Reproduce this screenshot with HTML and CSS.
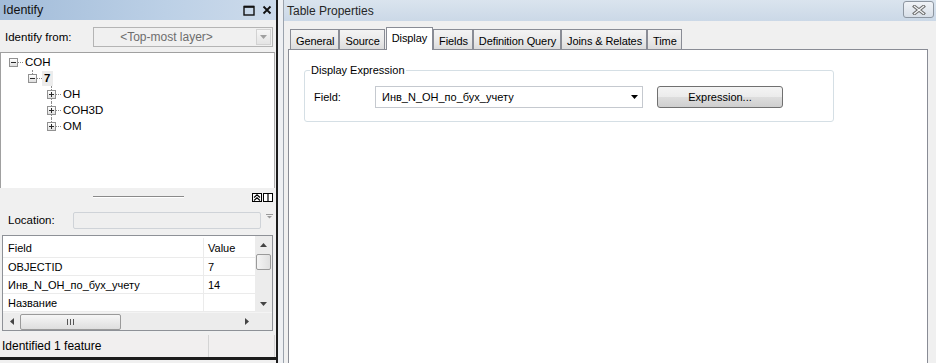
FILE: index.html
```html
<!DOCTYPE html>
<html>
<head>
<meta charset="utf-8">
<link rel="stylesheet" href="styles.css">
</head>
<body>
<div class="app">
  <section class="identify">
    <header class="id-title">
      <span class="id-title-text">Identify</span>
      <span class="win-btns">
        <svg width="12" height="11" viewBox="0 0 12 11"><rect x="1" y="1.5" width="10" height="8.5" fill="none" stroke="#111" stroke-width="1.4"/><line x1="1" y1="1.8" x2="11" y2="1.8" stroke="#111" stroke-width="2"/></svg>
        <svg width="10" height="10" viewBox="0 0 10 10"><path d="M1.5 1.5 L8.5 8.5 M8.5 1.5 L1.5 8.5" stroke="#111" stroke-width="1.8"/></svg>
      </span>
    </header>
    <div class="id-from">
      <span class="id-from-label">Identify from:</span>
      <div class="combo-dis">
        <span class="combo-dis-text">&lt;Top-most layer&gt;</span>
        <span class="combo-dis-btn"><svg width="7" height="4" viewBox="0 0 7 4"><path d="M0 0 H7 L3.5 4 Z" fill="#a0a0a0"/></svg></span>
      </div>
    </div>
    <div class="tree">
      <div class="trow l0"><span class="tbox minus"></span><span class="dots"></span><span class="tlabel">COH</span></div>
      <div class="trow l1 child last"><span class="tbox minus"></span><span class="dots"></span><span class="tlabel sel">7</span></div>
      <div class="trow l2 child"><span class="tbox plus"></span><span class="dots"></span><span class="tlabel">OH</span></div>
      <div class="trow l2 child"><span class="tbox plus"></span><span class="dots"></span><span class="tlabel">COH3D</span></div>
      <div class="trow l2 child last"><span class="tbox plus"></span><span class="dots"></span><span class="tlabel">OM</span></div>
    </div>
    <div class="splitter">
      <span></span>
      <span class="grip"></span>
      <span class="mini-btns">
        <span class="mini"><svg width="8" height="7" viewBox="0 0 8 7"><path d="M1 3.5 L4 0.8 L7 3.5 M1 6.5 L4 3.8 L7 6.5" fill="none" stroke="#000" stroke-width="1.2"/></svg></span>
        <span class="mini"><svg width="8" height="7" viewBox="0 0 8 7"><line x1="4" y1="0" x2="4" y2="7" stroke="#000" stroke-width="1.2"/></svg></span>
      </span>
    </div>
    <div class="loc-row">
      <span class="loc-label">Location:</span>
      <div class="loc-box"></div>
      <span class="loc-drop"><svg width="7" height="5" viewBox="0 0 7 5"><rect x="0" y="0" width="7" height="1" fill="#9a9a9a"/><path d="M1 2 H6 L3.5 4.5 Z" fill="#9a9a9a"/></svg></span>
    </div>
    <div class="grid">
      <div class="grid-body">
        <div class="gtable">
          <div class="grow ghead"><span class="c1">Field</span><span class="c2">Value</span></div>
          <div class="grow"><span class="c1">OBJECTID</span><span class="c2">7</span></div>
          <div class="grow"><span class="c1">Инв_N_OH_по_бух_учету</span><span class="c2">14</span></div>
          <div class="grow"><span class="c1">Название</span><span class="c2"></span></div>
        </div>
        <div class="vscroll">
          <span class="arrow"><svg width="7" height="4" viewBox="0 0 7 4"><path d="M3.5 0 L7 4 H0 Z" fill="#444"/></svg></span>
          <span class="vthumb"></span>
          <span class="vtrack"></span>
          <span class="arrow"><svg width="7" height="4" viewBox="0 0 7 4"><path d="M0 0 H7 L3.5 4 Z" fill="#444"/></svg></span>
        </div>
      </div>
      <div class="hscroll-row">
        <div class="hscroll">
          <span class="arrow"><svg width="4" height="7" viewBox="0 0 4 7"><path d="M4 0 V7 L0 3.5 Z" fill="#444"/></svg></span>
          <span class="hthumb"><svg width="7" height="6" viewBox="0 0 7 6"><path d="M0.5 0 V6 M3.5 0 V6 M6.5 0 V6" stroke="#555" stroke-width="1"/></svg></span>
          <span class="htrack"></span>
          <span class="arrow"><svg width="4" height="7" viewBox="0 0 4 7"><path d="M0 0 V7 L4 3.5 Z" fill="#444"/></svg></span>
        </div>
        <span class="corner"></span>
      </div>
    </div>
    <div class="status">
      <span class="status-text">Identified 1 feature</span>
      <span class="status-cell"></span>
    </div>
  </section>
  <div class="gap"></div>
  <section class="props">
    <header class="p-title">
      <span class="p-title-text">Table Properties</span>
      <span class="close-btn"><svg width="14" height="10" viewBox="0 0 14 10"><path d="M2.5 1.5 L11.5 8.5 M11.5 1.5 L2.5 8.5" stroke="#6e6e6e" stroke-width="3.4" stroke-linecap="square"/><path d="M2.5 1.5 L11.5 8.5 M11.5 1.5 L2.5 8.5" stroke="#f4f6f8" stroke-width="1.3" stroke-linecap="square"/></svg></span>
    </header>
    <div class="p-body">
      <div class="tabs">
        <span class="tab">General</span>
        <span class="tab">Source</span>
        <span class="tab active">Display</span>
        <span class="tab">Fields</span>
        <span class="tab">Definition Query</span>
        <span class="tab">Joins &amp; Relates</span>
        <span class="tab">Time</span>
      </div>
      <div class="panel">
        <fieldset class="group">
          <legend>Display Expression</legend>
          <div class="field-row">
            <span class="field-label">Field:</span>
            <div class="combo">
              <span>Инв_N_OH_по_бух_учету</span>
              <svg width="7" height="4" viewBox="0 0 7 4"><path d="M0 0 H7 L3.5 4 Z" fill="#000"/></svg>
            </div>
            <button class="btn">Expression...</button>
          </div>
        </fieldset>
      </div>
    </div>
  </section>
</div>
</body>
</html>
```
FILE: styles.css
```css
* { box-sizing: border-box; }
html, body { margin: 0; padding: 0; }
body {
  width: 936px;
  height: 363px;
  overflow: hidden;
  background: #f0f0f0;
  font-family: "Liberation Sans", Arial, sans-serif;
  font-size: 11px;
  color: #000;
}
.app { display: flex; height: 363px; }

/* ---------- Identify ---------- */
.identify {
  width: 278px;
  flex: none;
  display: flex;
  flex-direction: column;
  background: #f0f0f0;
  border-right: 2px solid #1c1c1c;
}
.id-title {
  height: 20px;
  flex: none;
  display: flex;
  align-items: center;
  justify-content: space-between;
  padding: 0 4px 0 3px;
  background: linear-gradient(to right, #a2bcd9, #bcd0e6 60%, #cddbeb);
}
.id-title-text { font-size: 12.5px; color: #111; }
.win-btns { display: flex; align-items: center; gap: 7px; }

.id-from {
  height: 32px;
  flex: none;
  display: flex;
  align-items: center;
  padding-left: 5px;
  padding-top: 2px;
}
.id-from-label { width: 88px; font-size: 11.5px; }
.combo-dis {
  width: 180px;
  height: 20px;
  border: 1px solid #b4b4b4;
  background: #f0f0f0;
  display: flex;
  align-items: center;
  padding: 1px;
}
.combo-dis-text {
  flex: 1;
  text-align: center;
  color: #6d6d6d;
  font-size: 12px;
  padding-right: 18px;
}
.combo-dis-btn {
  width: 15px;
  height: 16px;
  border: 1px solid #d2d2d2;
  background: linear-gradient(#f6f6f6, #e4e4e4);
  display: flex;
  align-items: center;
  justify-content: center;
}

.tree {
  height: 136px;
  flex: none;
  background: #fff;
  border-top: 1px solid #a0a0a0;
  border-left: 1px solid #a0a0a0;
  border-right: 1px solid #b0b0b0;
  padding-top: 1px;
  margin-right: 1px;
}
.trow {
  height: 16px;
  display: flex;
  align-items: center;
  position: relative;
}
.trow.l0 { padding-left: 8px; }
.trow.l1 { padding-left: 27px; }
.trow.l2 { padding-left: 46px; }
.trow.child::before {
  content: "";
  position: absolute;
  top: 0;
  bottom: 0;
  border-left: 1px dotted #8c8c8c;
}
.trow.child.last::before { bottom: 50%; }
.trow.l1::before { left: 31px; }
.trow.l2::before { left: 50px; }
.tbox {
  width: 9px;
  height: 9px;
  border: 1px solid #919191;
  background: linear-gradient(#ffffff, #dedede);
  position: relative;
  flex: none;
}
.tbox::before {
  content: "";
  position: absolute;
  left: 1px;
  top: 3px;
  width: 5px;
  height: 1px;
  background: #2a2a2a;
}
.tbox.plus::after {
  content: "";
  position: absolute;
  left: 3px;
  top: 1px;
  width: 1px;
  height: 5px;
  background: #2a2a2a;
}
.dots {
  width: 5px;
  height: 0;
  border-top: 1px dotted #8c8c8c;
  flex: none;
  margin-top: 1px;
}
.tlabel {
  padding: 0 2px;
  height: 15px;
  line-height: 15px;
  font-size: 11.5px;
}
.tlabel.sel { background: #ececec; padding: 0 3px 0 2px; font-weight: bold; }

.splitter {
  height: 17px;
  flex: none;
  display: grid;
  grid-template-columns: 1fr 91px 1fr;
  align-items: center;
}
.grip {
  height: 2px;
  border-top: 1px solid #8a8a8a;
  border-bottom: 1px solid #ffffff;
  margin-top: 1px;
}
.mini-btns { justify-self: end; display: flex; gap: 1px; margin-right: 3px; margin-top: 2px; }
.mini {
  width: 10px;
  height: 9px;
  border: 1px solid #000;
  background: #fff;
  display: flex;
  align-items: center;
  justify-content: center;
}

.loc-row {
  height: 28px;
  flex: none;
  display: flex;
  align-items: center;
  padding-left: 8px;
  padding-top: 2px;
}
.loc-label { width: 65px; font-size: 11.5px; }
.loc-box {
  width: 188px;
  height: 17px;
  border: 1px solid #cfd3d8;
  border-radius: 2px;
  background: #efefef;
}
.loc-drop { margin-left: 5px; margin-top: -8px; display: flex; }

.grid {
  margin: 2px 3px 0 2px;
  border: 1px solid #8e9197;
  background: #fff;
  flex: none;
}
.grid-body { display: flex; height: 76px; }
.gtable { flex: 1; }
.grow {
  height: 18px;
  display: flex;
  align-items: center;
  border-bottom: 1px solid #ebebeb;
}
.grow.ghead { height: 22px; padding-top: 2px; }
.grow .c1 {
  width: 201px;
  height: 100%;
  display: flex;
  align-items: center;
  padding-left: 5px;
  border-right: 1px solid #ebebeb;
}
.grow .c2 { padding-left: 4px; }
.vscroll {
  width: 17px;
  background: #ececec;
  display: flex;
  flex-direction: column;
  align-items: center;
}
.vscroll .arrow { height: 17px; display: flex; align-items: center; justify-content: center; }
.vthumb {
  width: 15px;
  height: 16px;
  border: 1px solid #9a9a9a;
  border-radius: 2px;
  background: linear-gradient(to right, #f4f4f4, #e0e0e0);
  margin-top: 1px;
}
.vtrack { flex: 1; }
.hscroll-row { display: flex; height: 18px; border-top: 1px solid #f4f4f4; }
.hscroll {
  flex: 1;
  background: #ececec;
  display: flex;
  align-items: center;
}
.hscroll .arrow { width: 17px; display: flex; align-items: center; justify-content: center; }
.hthumb {
  width: 101px;
  height: 16px;
  border: 1px solid #9a9a9a;
  border-radius: 2px;
  background: linear-gradient(#f6f6f6, #dedede);
  display: flex;
  align-items: center;
  justify-content: center;
}
.htrack { flex: 1; }
.corner { width: 17px; background: #ececec; }

.status {
  margin-top: 4px;
  height: 25px;
  flex: none;
  display: flex;
  background: #f1efef;
  border-bottom: 3px solid #1c1c1c;
}
.status-text { width: 208px; padding-left: 2px; font-size: 12px; line-height: 23px; }
.status-cell { flex: 1; border-left: 1px solid #d4d4d4; border-right: 1px solid #d4d4d4; margin-right: 1px; }

.gap { width: 5px; flex: none; background: #eef0f3; }

/* ---------- Table Properties ---------- */
.props {
  flex: 1;
  display: flex;
  flex-direction: column;
  border-left: 1px solid #9ba3ad;
  background: #f0f0f0;
}
.p-title {
  height: 21px;
  flex: none;
  display: flex;
  align-items: center;
  justify-content: space-between;
  padding: 0 2px 0 3px;
  background: linear-gradient(#dae4ee, #cbd8e7);
}
.p-title-text { font-size: 12px; color: #262626; }
.close-btn {
  width: 31px;
  height: 17px;
  margin-top: -2px;
  border: 1px solid #8d96a1;
  border-radius: 3px;
  background: linear-gradient(#f0f3f7, #d8dfe8);
  display: flex;
  align-items: center;
  justify-content: center;
}
.p-body {
  flex: 1;
  display: flex;
  flex-direction: column;
  padding: 6px 8px 0 4px;
}
.tabs {
  height: 22px;
  display: flex;
  align-items: flex-end;
  padding-left: 2px;
  position: relative;
  z-index: 1;
}
.tab {
  height: 20px;
  padding: 2px 4px 0 5px;
  border: 1px solid #898c95;
  border-bottom: none;
  background: linear-gradient(#f3f3f3, #ebebeb 50%, #dcdcdc);
  display: flex;
  align-items: center;
  letter-spacing: -0.1px;
}
.tab.active {
  height: 23px;
  margin-bottom: -1px;
  background: #fff;
  padding: 0 5px 2px 5px;
  margin-left: 1px;
  margin-right: 0;
}
.panel {
  flex: 1;
  background: #fff;
  border: 1px solid #898c95;
  border-bottom: none;
  padding: 14px 15px;
}
.group {
  margin: 0;
  width: 530px;
  border: 1px solid #d5dfe5;
  border-radius: 3px;
  padding: 9px 9px 13px 9px;
}
.group legend {
  margin-left: -4px;
  padding: 0 1px;
  font-size: 11px;
  line-height: 13px;
}
.field-row { display: flex; align-items: center; height: 22px; }
.field-label { width: 61px; }
.combo {
  width: 268px;
  height: 22px;
  border: 1px solid #c5c9cf;
  background: #fff;
  display: flex;
  align-items: center;
  justify-content: space-between;
  padding: 0 4px 0 6px;
}
.btn {
  margin-left: 14px;
  width: 126px;
  height: 22px;
  border: 1px solid #707070;
  border-radius: 3px;
  background: linear-gradient(#f4f4f4, #ebebeb 50%, #dddddd 51%, #cfcfcf);
  font-family: "Liberation Sans", Arial, sans-serif;
  font-size: 11px;
  color: #000;
  padding: 0;
}
```
